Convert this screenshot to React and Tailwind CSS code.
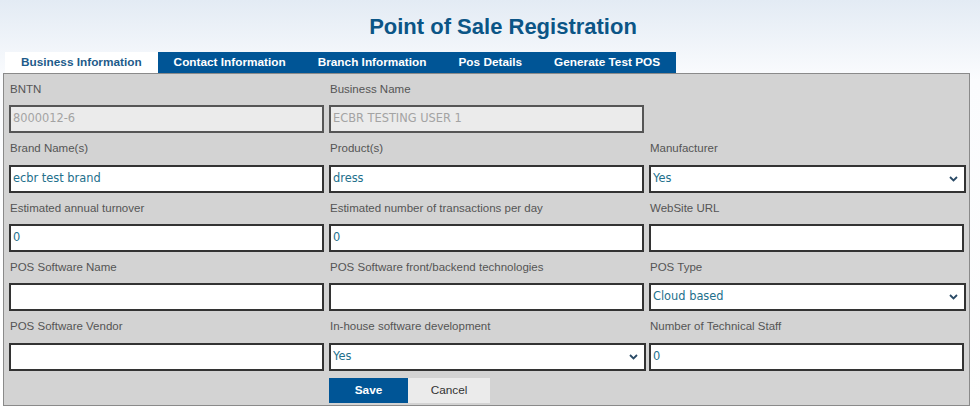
const tabs = ["Contact Information", "Branch Information", "Pos Details", "Generate Test POS"];

const rows = [
  [
    { label: "BNTN", value: "8000012-6", disabled: true },
    { label: "Business Name", value: "ECBR TESTING USER 1", disabled: true },
    null,
  ],
  [
    { label: "Brand Name(s)", value: "ecbr test brand" },
    { label: "Product(s)", value: "dress" },
    { label: "Manufacturer", value: "Yes", select: true },
  ],
  [
    { label: "Estimated annual turnover", value: "0" },
    { label: "Estimated number of transactions per day", value: "0" },
    { label: "WebSite URL", value: "" },
  ],
  [
    { label: "POS Software Name", value: "" },
    { label: "POS Software front/backend technologies", value: "" },
    { label: "POS Type", value: "Cloud based", select: true },
  ],
  [
    { label: "POS Software Vendor", value: "" },
    { label: "In-house software development", value: "Yes", select: true },
    { label: "Number of Technical Staff", value: "0" },
  ],
];

// label band heights per row (rows sit on a ~59.5px pitch)
const labelH = ["h-[31px]", "h-[32px]", "h-[31px]", "h-[31px]", "h-[32px]"];

function Chevron() {
  return (
    <svg width="9" height="6" viewBox="0 0 9 6" className="shrink-0">
      <path d="M1 1l3.5 3.5L8 1" fill="none" stroke="#2a4a66" strokeWidth="1.8" />
    </svg>
  );
}

function Field({ field, lh }) {
  if (!field) return <div />;
  const box = field.disabled
    ? "bg-[#ebebeb] text-[#a3a3a3] border-[#555]"
    : "bg-white text-[#23708c] border-[#333]";
  return (
    <div className="flex flex-col">
      <div className={`${lh} flex items-center pl-[1px] text-[11.5px] text-[#555]`}>{field.label}</div>
      <div
        className={`h-[28px] border-2 flex items-center pl-[2px] pr-[6px] font-['DejaVu_Sans',sans-serif] text-[11.4px] ${box} ${
          field.select ? "w-[calc(100%+2px)]" : ""
        }`}
      >
        <span className="flex-1 truncate">{field.value}</span>
        {field.select && <Chevron />}
      </div>
    </div>
  );
}

export default function App() {
  return (
    <div className="h-[408px] w-full font-['Liberation_Sans',Arial,sans-serif] bg-[linear-gradient(to_bottom,#e3ebf4,#fbfcfe_80px,#ffffff)]">
      <div className="h-[52px] flex items-center justify-center pl-[26px]">
        <h1 className="text-[22px] font-bold text-[#0b5586]">Point of Sale Registration</h1>
      </div>
      <div className="ml-[5px] flex h-[21px]">
        <div className="px-4 bg-white text-[#1d5b8a] font-bold text-[11.8px] flex items-center">Business Information</div>
        <div className="flex bg-[#005596]">
          {tabs.map((t) => (
            <div key={t} className="px-4 text-white font-bold text-[11.8px] flex items-center">
              {t}
            </div>
          ))}
        </div>
      </div>
      <div className="ml-[3px] w-[967px] border border-[#8a8a8a] bg-[#d3d3d3] px-[5px] pb-[2px]">
        {rows.map((r, i) => (
          <div key={i} className="grid grid-cols-3 gap-x-[5px]">
            {r.map((f, j) => (
              <Field key={j} field={f} lh={labelH[i]} />
            ))}
          </div>
        ))}
        <div className="grid grid-cols-3 gap-x-[5px] mt-[7px]">
          <div />
          <div className="flex h-[25px]">
            <button className="w-[79px] bg-[#005596] text-white font-bold text-[11.8px]">Save</button>
            <button className="w-[82px] bg-[#ebebeb] text-[#333] text-[11.8px]">Cancel</button>
          </div>
        </div>
      </div>
    </div>
  );
}
